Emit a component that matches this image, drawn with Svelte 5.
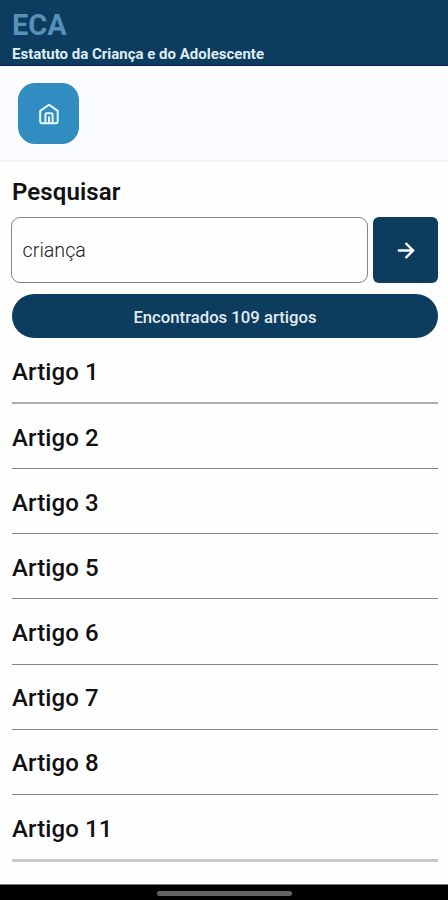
<script>
    let termo = 'criança';
    let total = 109;
    let artigos = [1, 2, 3, 5, 6, 7, 8, 11];
</script>

<div class="app">
    <header>
        <h1>ECA</h1>
        <p>Estatuto da Criança e do Adolescente</p>
    </header>

    <nav>
        <button class="home" aria-label="Início">
            <svg width="24" height="24" viewBox="0 0 24 24" fill="none" stroke="currentColor" stroke-width="2" stroke-linejoin="round" stroke-linecap="round">
                <path d="M3.2 8.9 12 2.7l8.7 6.2v10.4a2 2 0 0 1-2 2H5.2a2 2 0 0 1-2-2z" />
                <path d="M8.4 21v-8.6a1.2 1.2 0 0 1 1.2-1.2h4.8a1.2 1.2 0 0 1 1.2 1.2V21M12 15.2V21" />
            </svg>
        </button>
    </nav>

    <main>
        <h2>Pesquisar</h2>

        <!-- Campo de busca -->
        <div class="busca">
            <input type="text" bind:value={termo} />
            <button class="buscar" aria-label="Buscar">
                <svg width="24" height="24" viewBox="0 0 24 24" fill="none" stroke="currentColor" stroke-width="2.4">
                    <path d="M3.8 12.5h15M11.6 5l7.5 7.5-7.5 7.5" />
                </svg>
            </button>
        </div>

        <div class="total">Encontrados {total} artigos</div>

        <!-- Lista de artigos -->
        <ul>
            {#each artigos as artigo}
                <li>Artigo {artigo}</li>
            {/each}
        </ul>
    </main>

    <footer>
        <div class="barra"></div>
    </footer>
</div>

<style>
    :global(body) {
        background: #fefefe;
    }
    .app {
        display: flex;
        flex-direction: column;
        height: 900px;
        overflow: hidden;
        font-family: Roboto, sans-serif;
        color: #111;
    }
    h1, h2, p, ul {
        margin: 0;
        padding: 0;
    }
    header {
        box-sizing: border-box;
        height: 66px;
        padding: 8px 12px 0;
        background: #0c3c5e;
        border-bottom: 1px solid #08204a;
        white-space: nowrap;
    }
    h1 {
        font-size: 29px;
        line-height: 34px;
        font-weight: 700;
        color: #5790b8;
    }
    header p {
        font-size: 15px;
        line-height: 18px;
        padding-top: 3px;
        font-weight: 700;
        color: #dfecf5;
    }
    nav {
        box-sizing: border-box;
        height: 96px;
        padding: 17px 18px;
        background: #fafcff;
        border-bottom: 2px solid #f0f1f3;
    }
    button {
        display: flex;
        align-items: center;
        justify-content: center;
        border: none;
        padding: 0;
        color: #fff;
    }
    .home {
        width: 61px;
        height: 61px;
        border-radius: 17px;
        background: #318cc1;
        color: #e6fbff;
    }
    main {
        flex: 1;
        padding: 16px 10px 0 12px;
    }
    h2 {
        font-size: 24px;
        line-height: 28px;
        font-weight: 600;
        letter-spacing: 0.1px;
    }
    .busca {
        display: flex;
        gap: 5px;
        margin-top: 11px;
        margin-left: -1px;
    }
    input {
        box-sizing: border-box;
        flex: 1;
        min-width: 0;
        height: 66px;
        padding: 1px 10px 0 10.6px;
        border: 1px solid #858585;
        border-radius: 9px;
        background: #fefefe;
        font: 300 19.7px Roboto, sans-serif;
        color: #222;
        outline: none;
    }
    .buscar {
        width: 65px;
        height: 66px;
        border-radius: 6px;
        background: #0c3c5e;
    }
    .total {
        height: 44px;
        margin-top: 11px;
        border-radius: 22px;
        background: #0c3c5e;
        color: #e2ebf2;
        font-size: 16.7px;
        line-height: 47px;
        font-weight: 500;
        text-align: center;
    }
    ul {
        list-style: none;
    }
    li {
        box-sizing: border-box;
        height: 65.15px;
        padding-top: 19.6px;
        border-bottom: 1px solid #868686;
        font-size: 24px;
        line-height: 28px;
        font-weight: 500;
        letter-spacing: 0.1px;
    }
    li:first-child {
        height: 66px;
        padding-top: 20px;
        border-bottom: 2px solid #adadad;
    }
    li:last-child {
        height: 67px;
        padding-top: 20.2px;
        border-bottom: 3px solid #c9c9c9;
    }
    footer {
        box-sizing: border-box;
        height: 16px;
        padding-top: 6px;
        background: #000;
        border-top: 1px solid #777;
    }
    .barra {
        width: 135px;
        height: 5px;
        margin: 0 auto;
        border-radius: 3px;
        background: #626262;
    }
</style>
